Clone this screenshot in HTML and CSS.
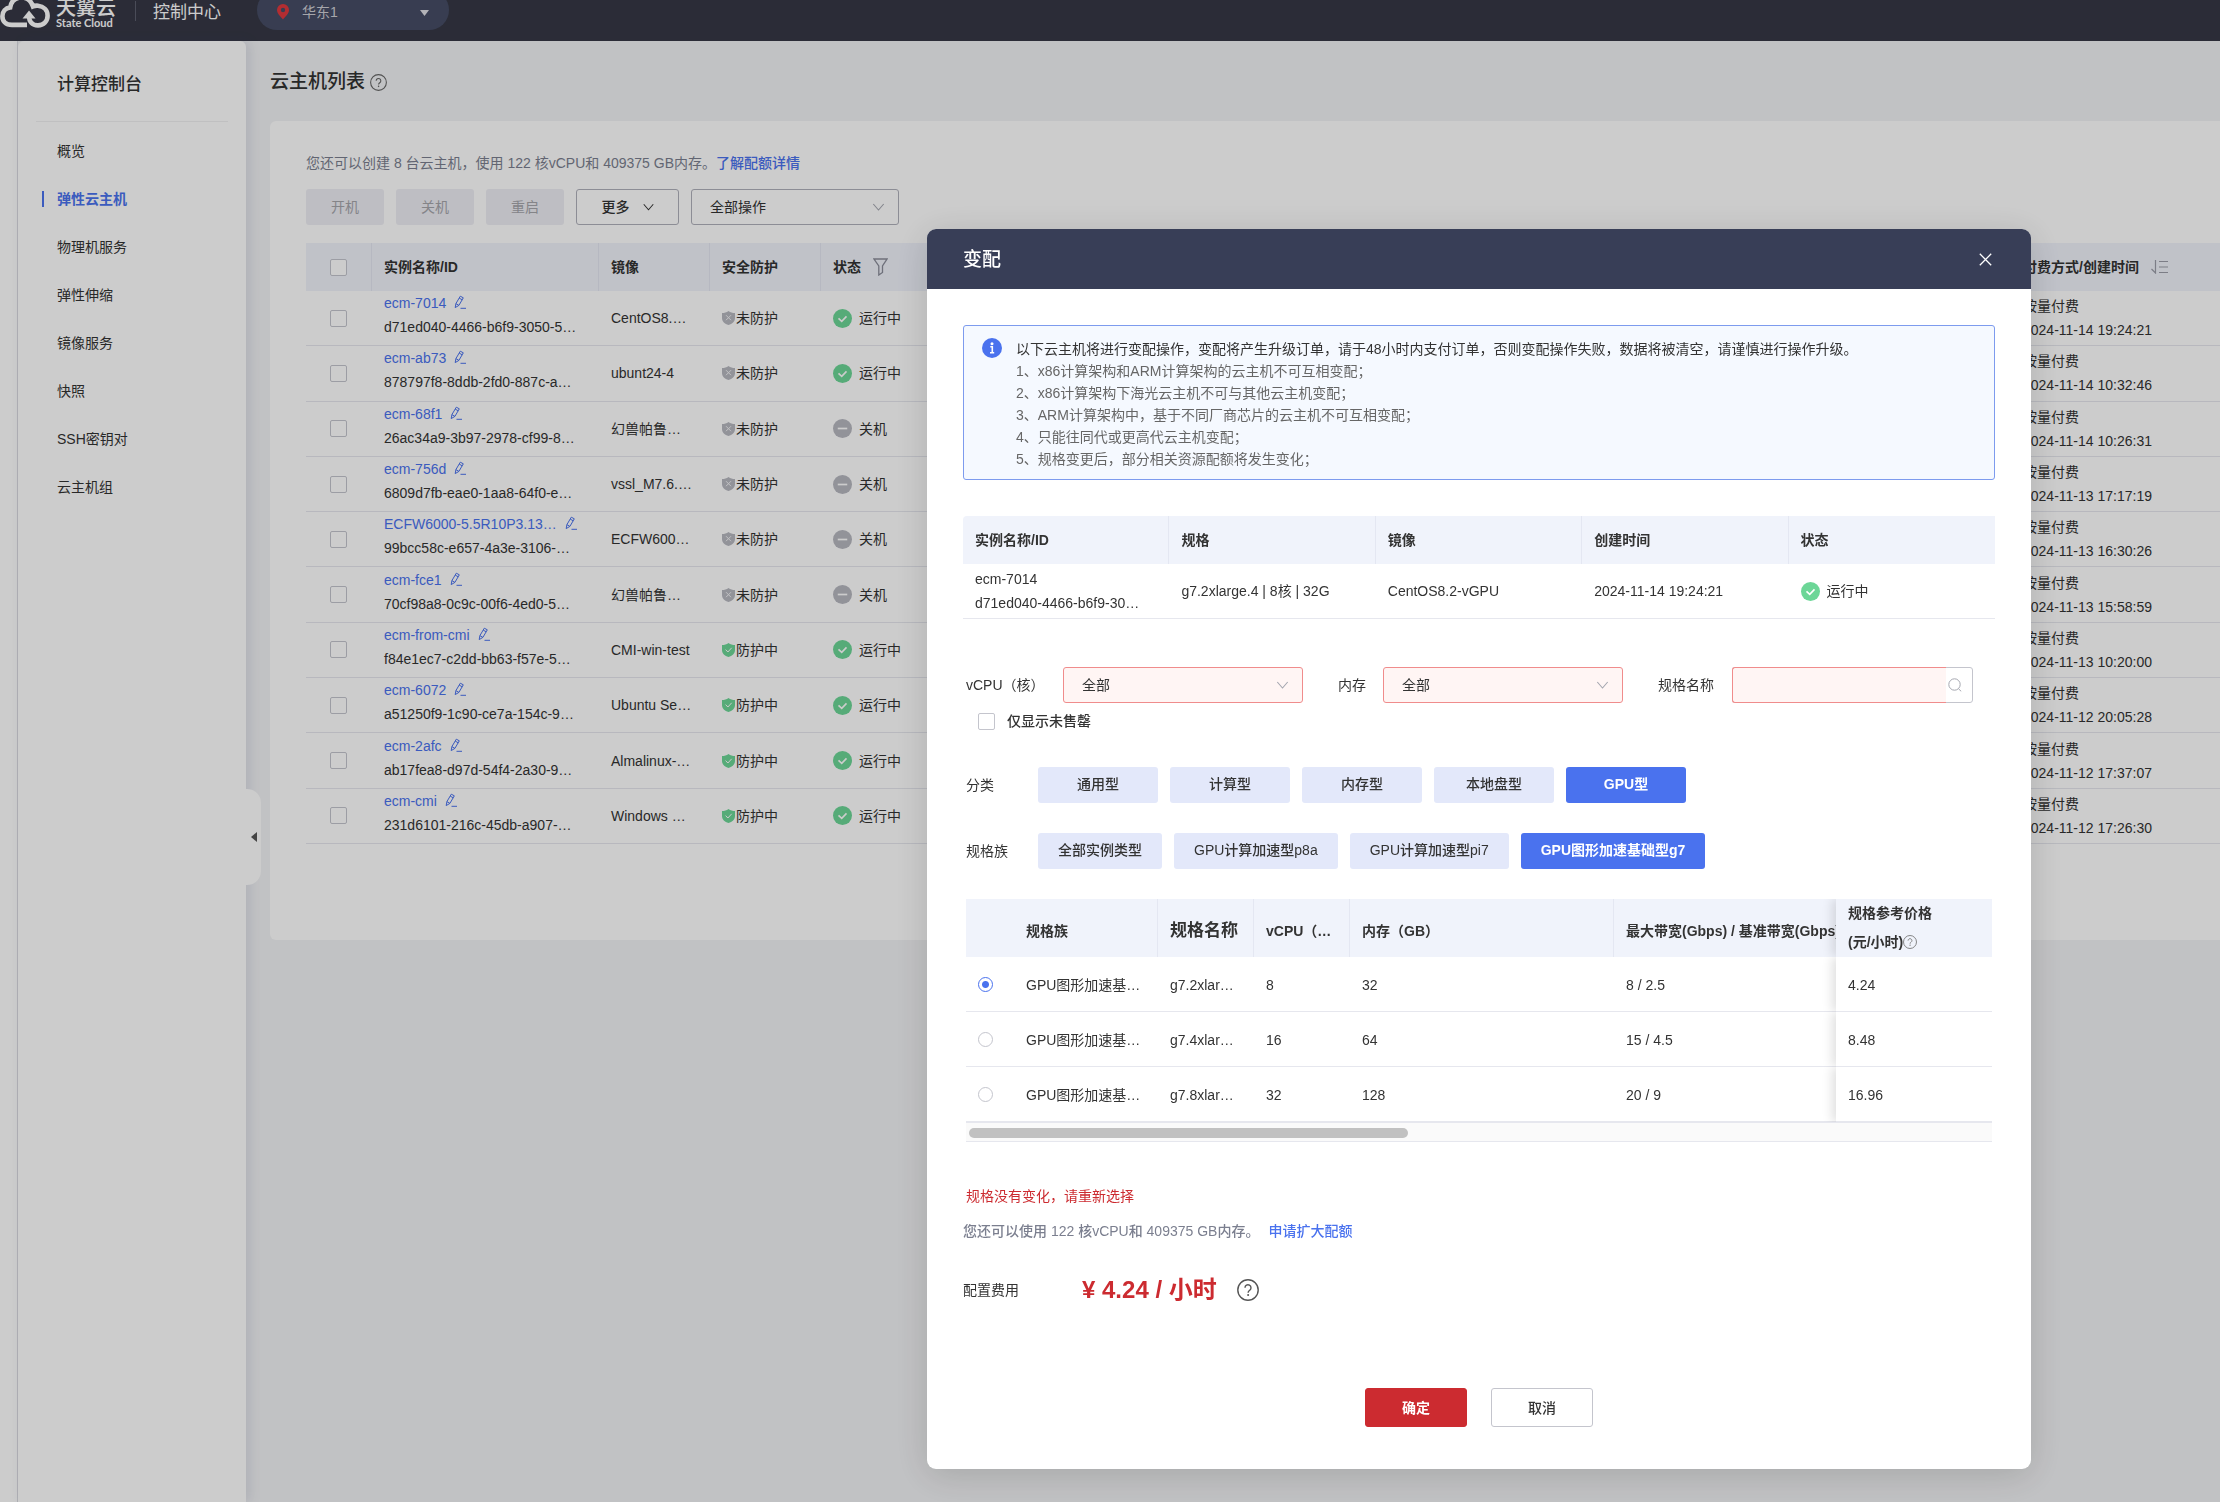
FILE: index.html
```html
<!DOCTYPE html>
<html lang="zh-CN">
<head>
    <meta charset="UTF-8">
    <meta name="viewport" content="width=device-width, initial-scale=1.0">
    <title>云主机列表 - 控制中心</title>
    <link rel="stylesheet" href="styles.css">
</head>
<body>

<!-- 公用图标 -->
<svg class="sprite" aria-hidden="true">
    <symbol id="i-edit" viewBox="0 0 12 14">
        <path d="M1.2 12.6 1.9 8.6 6.3 1.2 9.3 2.8 4.9 10.4zM5.2 3.1 8.2 4.8M1.9 8.6 4.9 10.4M6.5 13.3H12" fill="none" stroke="currentColor" stroke-width="1"/>
    </symbol>
    <symbol id="i-help" viewBox="0 0 22 22">
        <circle cx="11" cy="11" r="10.2" fill="none" stroke="currentColor" stroke-width="1.4"/>
        <path d="M8 8.8a3 3 0 1 1 4.6 2.5c-1 .7-1.5 1.1-1.5 2.4" fill="none" stroke="currentColor" stroke-width="1.4"/>
        <circle cx="11.1" cy="16" r="1" fill="currentColor"/>
    </symbol>
    <symbol id="i-down" viewBox="0 0 12 8">
        <path d="M.8 1 6 7l5.2-6" fill="none" stroke="currentColor" stroke-width="1.1"/>
    </symbol>
    <symbol id="i-ok" viewBox="0 0 20 20">
        <circle cx="10" cy="10" r="10" fill="#6cd697"/>
        <path d="M5.8 9.8 9.2 13l5-5.2" fill="none" stroke="#fff" stroke-width="1.7"/>
    </symbol>
    <symbol id="i-off" viewBox="0 0 20 20">
        <circle cx="10" cy="10" r="10" fill="#b7b8c0"/>
        <path d="M5 10h10" stroke="#fff" stroke-width="1.8"/>
    </symbol>
    <symbol id="i-shield-x" viewBox="0 0 13 14">
        <path d="M6.5 0C8.500 1.500 10.500 2 13 2v5c0 3.600-2.800 5.800-6.500 7C2.800 12.800 0 10.600 0 7V2c2.500 0 4.500-.5 6.500-2z" fill="#b7b8c0"/>
        <path d="M4 4.200l5 5M9 4.200l-5 5" stroke="#f3f3f5" stroke-width="1"/>
    </symbol>
    <symbol id="i-shield-ok" viewBox="0 0 13 14">
        <path d="M6.5 0C8.500 1.500 10.500 2 13 2v5c0 3.600-2.800 5.800-6.500 7C2.800 12.800 0 10.600 0 7V2c2.500 0 4.500-.5 6.500-2z" fill="#6cd697"/>
        <path d="M3.600 6.600 5.900 9l3.800-4.200" fill="none" stroke="#fff" stroke-width="1"/>
    </symbol>
</svg>

<header class="topbar">
    <a class="logo" href="#">
        <svg class="logo-cloud" viewBox="0 -6 50 34">
            <path d="M27 24.900H12C5.500 24.900 2.400 21 2.400 16.200 2.400 11.300 5.500 8 10.200 7.400 11.400.5 16-2.500 21.500-2.500c5.500 0 9.500 3 11.500 9 1.600-.7 3.200-1 5-.8 5.600.6 9.600 4.600 9.600 10 0 5.600-4 9.700-9.600 9.700-6 0-9-4-9-9.400V15" fill="none" stroke="#fff" stroke-width="4.600"/>
            <path d="M22.500 18.500 29 10.500l6.500 8z" fill="#fff"/>
        </svg>
        <span class="logo-text">
            <strong>天翼云</strong>
            <small>State Cloud</small>
        </span>
    </a>
    <span class="split"></span>
    <span class="center-name">控制中心</span>
    <button class="region" type="button">
        <svg width="12" height="16" viewBox="0 0 12 16"><path d="M6 0a6 6 0 0 1 6 6c0 3.500-3.500 6.500-6 9.500C3.500 12.500 0 9.500 0 6a6 6 0 0 1 6-6z" fill="#e0393e"/><circle cx="6" cy="6" r="2.200" fill="#464d66"/></svg>
        <span>华东1</span>
        <svg class="caret" width="9" height="6" viewBox="0 0 9 6"><path d="M0 0h9L4.500 6z" fill="#e0e0e6"/></svg>
    </button>
</header>

<div class="layout">
    <div class="rail"></div>
    <nav class="sidebar">
        <h2>计算控制台</h2>
        <a href="#">概览</a>
        <a href="#" class="active">弹性云主机</a>
        <a href="#">物理机服务</a>
        <a href="#">弹性伸缩</a>
        <a href="#">镜像服务</a>
        <a href="#">快照</a>
        <a href="#">SSH密钥对</a>
        <a href="#">云主机组</a>
        <button class="fold" type="button" aria-label="收起"><svg width="6" height="10" viewBox="0 0 6 10"><path d="M6 0v10L0 5z" fill="#555"/></svg></button>
    </nav>

    <main class="content">
        <h1>云主机列表<svg class="help"><use href="#i-help"/></svg></h1>
        <section class="card">
            <p class="quota">您还可以创建 8 台云主机，使用 122 核vCPU和 409375 GB内存。<a href="#">了解配额详情</a></p>
            <div class="toolbar">
                <button type="button" disabled>开机</button>
                <button type="button" disabled>关机</button>
                <button type="button" disabled>重启</button>
                <button type="button" class="more">更多<svg class="down"><use href="#i-down"/></svg></button>
                <span class="select-box">
                    <select aria-label="全部操作"><option>全部操作</option></select>
                    <svg class="arrow"><use href="#i-down"/></svg>
                </span>
            </div>

            <table class="hosts">
                <colgroup><col class="w-check"><col class="w-name"><col class="w-mid"><col class="w-mid"><col><col class="w-pay"></colgroup>
                <thead>
                    <tr>
                        <th><input type="checkbox" aria-label="全选"></th>
                        <th>实例名称/ID</th>
                        <th>镜像</th>
                        <th>安全防护</th>
                        <th><span class="inline">状态<svg width="15" height="18" viewBox="0 0 15 18"><path d="M1 1h13L9.500 8v6.500L5.800 17V8z" fill="none" stroke="#8a8c99" stroke-width="1.300"/></svg></span></th>
                        <th><span class="inline">付费方式/创建时间<svg width="17" height="14" viewBox="0 0 17 14"><path d="M4.500 0v13L.5 9M8 1.500h9M8 7h9M8 12.500h9" fill="none" stroke="#9b9da8" stroke-width="1.200"/></svg></span></th>
                    </tr>
                </thead>
                <tbody>
                    <tr>
                        <td><input type="checkbox" aria-label="ecm-7014"></td>
                        <td class="name"><a href="#">ecm-7014<svg class="edit"><use href="#i-edit"/></svg></a><div>d71ed040-4466-b6f9-3050-5…</div></td>
                        <td>CentOS8.…</td>
                        <td><span class="safe"><svg><use href="#i-shield-x"/></svg>未防护</span></td>
                        <td><span class="state"><svg><use href="#i-ok"/></svg>运行中</span></td>
                        <td>按量付费<div>2024-11-14 19:24:21</div></td>
                    </tr>
                    <tr>
                        <td><input type="checkbox" aria-label="ecm-ab73"></td>
                        <td class="name"><a href="#">ecm-ab73<svg class="edit"><use href="#i-edit"/></svg></a><div>878797f8-8ddb-2fd0-887c-a…</div></td>
                        <td>ubunt24-4</td>
                        <td><span class="safe"><svg><use href="#i-shield-x"/></svg>未防护</span></td>
                        <td><span class="state"><svg><use href="#i-ok"/></svg>运行中</span></td>
                        <td>按量付费<div>2024-11-14 10:32:46</div></td>
                    </tr>
                    <tr>
                        <td><input type="checkbox" aria-label="ecm-68f1"></td>
                        <td class="name"><a href="#">ecm-68f1<svg class="edit"><use href="#i-edit"/></svg></a><div>26ac34a9-3b97-2978-cf99-8…</div></td>
                        <td>幻兽帕鲁…</td>
                        <td><span class="safe"><svg><use href="#i-shield-x"/></svg>未防护</span></td>
                        <td><span class="state"><svg><use href="#i-off"/></svg>关机</span></td>
                        <td>按量付费<div>2024-11-14 10:26:31</div></td>
                    </tr>
                    <tr>
                        <td><input type="checkbox" aria-label="ecm-756d"></td>
                        <td class="name"><a href="#">ecm-756d<svg class="edit"><use href="#i-edit"/></svg></a><div>6809d7fb-eae0-1aa8-64f0-e…</div></td>
                        <td>vssl_M7.6.…</td>
                        <td><span class="safe"><svg><use href="#i-shield-x"/></svg>未防护</span></td>
                        <td><span class="state"><svg><use href="#i-off"/></svg>关机</span></td>
                        <td>按量付费<div>2024-11-13 17:17:19</div></td>
                    </tr>
                    <tr>
                        <td><input type="checkbox" aria-label="ECFW6000"></td>
                        <td class="name"><a href="#">ECFW6000-5.5R10P3.13…<svg class="edit"><use href="#i-edit"/></svg></a><div>99bcc58c-e657-4a3e-3106-…</div></td>
                        <td>ECFW600…</td>
                        <td><span class="safe"><svg><use href="#i-shield-x"/></svg>未防护</span></td>
                        <td><span class="state"><svg><use href="#i-off"/></svg>关机</span></td>
                        <td>按量付费<div>2024-11-13 16:30:26</div></td>
                    </tr>
                    <tr>
                        <td><input type="checkbox" aria-label="ecm-fce1"></td>
                        <td class="name"><a href="#">ecm-fce1<svg class="edit"><use href="#i-edit"/></svg></a><div>70cf98a8-0c9c-00f6-4ed0-5…</div></td>
                        <td>幻兽帕鲁…</td>
                        <td><span class="safe"><svg><use href="#i-shield-x"/></svg>未防护</span></td>
                        <td><span class="state"><svg><use href="#i-off"/></svg>关机</span></td>
                        <td>按量付费<div>2024-11-13 15:58:59</div></td>
                    </tr>
                    <tr>
                        <td><input type="checkbox" aria-label="ecm-from-cmi"></td>
                        <td class="name"><a href="#">ecm-from-cmi<svg class="edit"><use href="#i-edit"/></svg></a><div>f84e1ec7-c2dd-bb63-f57e-5…</div></td>
                        <td>CMI-win-test</td>
                        <td><span class="safe"><svg><use href="#i-shield-ok"/></svg>防护中</span></td>
                        <td><span class="state"><svg><use href="#i-ok"/></svg>运行中</span></td>
                        <td>按量付费<div>2024-11-13 10:20:00</div></td>
                    </tr>
                    <tr>
                        <td><input type="checkbox" aria-label="ecm-6072"></td>
                        <td class="name"><a href="#">ecm-6072<svg class="edit"><use href="#i-edit"/></svg></a><div>a51250f9-1c90-ce7a-154c-9…</div></td>
                        <td>Ubuntu Se…</td>
                        <td><span class="safe"><svg><use href="#i-shield-ok"/></svg>防护中</span></td>
                        <td><span class="state"><svg><use href="#i-ok"/></svg>运行中</span></td>
                        <td>按量付费<div>2024-11-12 20:05:28</div></td>
                    </tr>
                    <tr>
                        <td><input type="checkbox" aria-label="ecm-2afc"></td>
                        <td class="name"><a href="#">ecm-2afc<svg class="edit"><use href="#i-edit"/></svg></a><div>ab17fea8-d97d-54f4-2a30-9…</div></td>
                        <td>Almalinux-…</td>
                        <td><span class="safe"><svg><use href="#i-shield-ok"/></svg>防护中</span></td>
                        <td><span class="state"><svg><use href="#i-ok"/></svg>运行中</span></td>
                        <td>按量付费<div>2024-11-12 17:37:07</div></td>
                    </tr>
                    <tr>
                        <td><input type="checkbox" aria-label="ecm-cmi"></td>
                        <td class="name"><a href="#">ecm-cmi<svg class="edit"><use href="#i-edit"/></svg></a><div>231d6101-216c-45db-a907-…</div></td>
                        <td>Windows …</td>
                        <td><span class="safe"><svg><use href="#i-shield-ok"/></svg>防护中</span></td>
                        <td><span class="state"><svg><use href="#i-ok"/></svg>运行中</span></td>
                        <td>按量付费<div>2024-11-12 17:26:30</div></td>
                    </tr>
                </tbody>
            </table>
        </section>
    </main>
</div>

<div class="mask">
    <div class="modal" role="dialog" aria-labelledby="modal-title">
        <div class="modal-head">
            <h3 id="modal-title">变配</h3>
            <button type="button" aria-label="关闭"><svg width="13" height="13" viewBox="0 0 13 13"><path d="M.8.8l11.400 11.400M12.200.8.8 12.200" stroke="#fff" stroke-width="1.300"/></svg></button>
        </div>
        <div class="modal-body">
            <div class="alert">
                <svg width="20" height="20" viewBox="0 0 20 20"><circle cx="10" cy="10" r="10" fill="#4a72ee"/><circle cx="10" cy="5.800" r="1.500" fill="#fff"/><path d="M8.300 8.800H10.300V14.500M8 14.700h4.200" fill="none" stroke="#fff" stroke-width="1.600"/></svg>
                <div>
                    <p class="strong">以下云主机将进行变配操作，变配将产生升级订单，请于48小时内支付订单，否则变配操作失败，数据将被清空，请谨慎进行操作升级。</p>
                    <p>1、x86计算架构和ARM计算架构的云主机不可互相变配；</p>
                    <p>2、x86计算架构下海光云主机不可与其他云主机变配；</p>
                    <p>3、ARM计算架构中，基于不同厂商芯片的云主机不可互相变配；</p>
                    <p>4、只能往同代或更高代云主机变配；</p>
                    <p>5、规格变更后，部分相关资源配额将发生变化；</p>
                </div>
            </div>

            <table class="current">
                <thead>
                    <tr><th>实例名称/ID</th><th>规格</th><th>镜像</th><th>创建时间</th><th>状态</th></tr>
                </thead>
                <tbody>
                    <tr>
                        <td>ecm-7014<div>d71ed040-4466-b6f9-30…</div></td>
                        <td>g7.2xlarge.4 | 8核 | 32G</td>
                        <td>CentOS8.2-vGPU</td>
                        <td>2024-11-14 19:24:21</td>
                        <td><span class="state"><svg><use href="#i-ok"/></svg>运行中</span></td>
                    </tr>
                </tbody>
            </table>

            <div class="filters">
                <label class="l-cpu" for="cpu">vCPU（核）</label>
                <span class="select-box err">
                    <select id="cpu"><option>全部</option></select>
                    <svg class="arrow"><use href="#i-down"/></svg>
                </span>
                <label class="l-mem" for="mem">内存</label>
                <span class="select-box err">
                    <select id="mem"><option>全部</option></select>
                    <svg class="arrow"><use href="#i-down"/></svg>
                </span>
                <label class="l-spec" for="spec">规格名称</label>
                <span class="search">
                    <input type="text" id="spec">
                    <svg width="14" height="14" viewBox="0 0 14 14"><circle cx="6.500" cy="6.500" r="5.700" fill="none" stroke="#a5a7b0"/><path d="M10.500 10.800l2.700 2.500" stroke="#a5a7b0"/></svg>
                </span>
            </div>
            <label class="only"><input type="checkbox">仅显示未售罄</label>

            <div class="tabs kinds">
                <span class="tabs-label">分类</span>
                <button type="button">通用型</button>
                <button type="button">计算型</button>
                <button type="button">内存型</button>
                <button type="button">本地盘型</button>
                <button type="button" class="on">GPU型</button>
            </div>
            <div class="tabs">
                <span class="tabs-label">规格族</span>
                <button type="button">全部实例类型</button>
                <button type="button">GPU计算加速型p8a</button>
                <button type="button">GPU计算加速型pi7</button>
                <button type="button" class="on">GPU图形加速基础型g7</button>
            </div>

            <div class="spec-wrap">
                <table class="specs">
                    <colgroup><col class="w-radio"><col class="w-family"><col class="w-s"><col class="w-s"><col class="w-mem"><col><col class="w-price"></colgroup>
                    <thead>
                        <tr>
                            <th class="plain"></th>
                            <th>规格族</th>
                            <th class="big">规格名称</th>
                            <th>vCPU（…</th>
                            <th>内存（GB）</th>
                            <th class="plain">最大带宽(Gbps) / 基准带宽(Gbps)</th>
                            <th class="fixed">规格参考价格<div>(元/小时)<svg class="help-s"><use href="#i-help"/></svg></div></th>
                        </tr>
                    </thead>
                    <tbody>
                        <tr>
                            <td><input type="radio" name="flavor" aria-label="g7.2xlarge.4" checked></td>
                            <td>GPU图形加速基…</td>
                            <td>g7.2xlar…</td>
                            <td>8</td>
                            <td>32</td>
                            <td>8 / 2.5</td>
                            <td class="fixed">4.24</td>
                        </tr>
                        <tr>
                            <td><input type="radio" name="flavor" aria-label="g7.4xlarge.4"></td>
                            <td>GPU图形加速基…</td>
                            <td>g7.4xlar…</td>
                            <td>16</td>
                            <td>64</td>
                            <td>15 / 4.5</td>
                            <td class="fixed">8.48</td>
                        </tr>
                        <tr>
                            <td><input type="radio" name="flavor" aria-label="g7.8xlarge.4"></td>
                            <td>GPU图形加速基…</td>
                            <td>g7.8xlar…</td>
                            <td>32</td>
                            <td>128</td>
                            <td>20 / 9</td>
                            <td class="fixed">16.96</td>
                        </tr>
                    </tbody>
                </table>
            </div>
            <div class="scrollbar"><div class="thumb"></div></div>

            <p class="error">规格没有变化，请重新选择</p>
            <p class="remain">您还可以使用 122 核vCPU和 409375 GB内存。<a href="#">申请扩大配额</a></p>
            <div class="fee">
                <span class="fee-label">配置费用</span>
                <span class="price">¥ 4.24 / 小时</span>
                <svg><use href="#i-help"/></svg>
            </div>
            <div class="actions">
                <button type="button" class="primary">确定</button>
                <button type="button">取消</button>
            </div>
        </div>
    </div>
</div>

</body>
</html>
```
FILE: styles.css
```css
* {
    box-sizing: border-box;
}

body {
    margin: 0;
    min-height: 100vh;
    display: flex;
    flex-direction: column;
    overflow: hidden;
    font-family: "Liberation Sans", "Noto Sans CJK SC", sans-serif;
    font-size: 14px;
    line-height: 24px;
    color: #333;
    background: #f2f3f5;
}

h1, h2, h3, p {
    margin: 0;
}

a {
    color: #4a72ee;
    text-decoration: none;
}

button, select, input {
    font: inherit;
    color: inherit;
    margin: 0;
}

button {
    cursor: pointer;
    padding: 0;
}

svg {
    flex-shrink: 0;
}

.sprite {
    display: none;
}

/* ---------- 顶部 ---------- */
.topbar {
    height: 41px;
    display: flex;
    align-items: flex-end;
    padding-bottom: 11px;
    background: #363845;
    color: #fff;
}

.logo {
    display: flex;
    align-items: flex-end;
    gap: 6px;
    padding-bottom: 2px;
    color: #fff;
}

.logo-cloud {
    width: 50px;
    height: 34px;
}

.logo-text {
    display: flex;
    flex-direction: column;
    width: 79px;
}

.logo-text strong {
    font-size: 20px;
    font-weight: 500;
    line-height: 20px;
}

.logo-text small {
    font-family: Lato, sans-serif;
    font-size: 11px;
    font-weight: 700;
    line-height: 10px;
}

.split {
    width: 1px;
    height: 20px;
    margin-bottom: 9px;
    background: #5d606e;
}

.center-name {
    width: 121px;
    padding: 0 17px 5px;
    font-size: 17px;
}

.region {
    width: 192px;
    height: 40px;
    display: flex;
    align-items: flex-end;
    gap: 13px;
    padding: 0 20px 6px;
    border: 0;
    border-radius: 20px;
    background: #464d66;
    color: #d0d0d6;
}

.region svg {
    margin-bottom: 4px;
}

.region .caret {
    margin-left: auto;
    margin-bottom: 8px;
}

/* ---------- 布局 ---------- */
.layout {
    flex: 1;
    display: flex;
}

.rail {
    width: 18px;
    background: #fff;
    border-right: 1px solid #dcdde2;
}

.sidebar {
    position: relative;
    z-index: 1;
    width: 228px;
    padding: 0 18px;
    background: #fff;
    border-radius: 6px 6px 0 0;
    box-shadow: 4px 0 12px rgba(60, 65, 120, 0.12);
}

.sidebar h2 {
    height: 81px;
    margin-bottom: 5px;
    padding: 32px 21px 0;
    border-bottom: 1px solid #f0f0f2;
    font-size: 17px;
    font-weight: 500;
}

.sidebar a {
    display: block;
    padding: 0 21px;
    line-height: 48px;
    color: #333;
}

.sidebar a.active {
    position: relative;
    color: #4a72ee;
    font-weight: 700;
}

.sidebar a.active::before {
    content: "";
    position: absolute;
    left: 6px;
    top: 16px;
    width: 2px;
    height: 16px;
    background: #4a72ee;
}

.fold {
    position: absolute;
    left: 100%;
    top: 748px;
    width: 15px;
    height: 96px;
    border: 0;
    border-radius: 0 14px 14px 0;
    background: #fff;
}

.fold svg {
    display: block;
    margin: 0 auto;
}

.content {
    flex: 1;
    min-width: 0;
    padding: 26px 0 0 24px;
}

.content h1 {
    display: flex;
    align-items: center;
    gap: 5px;
    height: 30px;
    font-size: 19px;
    font-weight: 500;
}

.help {
    width: 17px;
    height: 17px;
    color: #666;
}

.card {
    margin-top: 24px;
    padding: 30px 0 0 36px;
    height: 819px;
    background: #fff;
    border-radius: 6px 0 0 6px;
}

.quota {
    color: #7b7f8f;
}

.quota a {
    font-weight: 500;
}

.toolbar {
    display: flex;
    gap: 12px;
    margin: 14px 0 18px;
}

.toolbar button {
    width: 78px;
    height: 36px;
    border: 0;
    border-radius: 3px;
    background: #eeeef4;
    color: #a5a5ab;
}

.toolbar .more {
    width: 103px;
    display: flex;
    align-items: center;
    justify-content: center;
    gap: 13px;
    border: 1px solid #b0b1bb;
    background: #fff;
    color: #333;
    font-weight: 500;
}

.down {
    width: 11px;
    height: 8px;
}

.select-box {
    position: relative;
    width: 208px;
}

.select-box select {
    width: 100%;
    height: 36px;
    padding: 0 18px;
    appearance: none;
    border: 1px solid #b0b1bb;
    border-radius: 3px;
    background: #fff;
}

.arrow {
    position: absolute;
    right: 14px;
    top: 14px;
    width: 13px;
    height: 8px;
    color: #a5a7b0;
    pointer-events: none;
}

/* ---------- 表格 ---------- */
table {
    width: 100%;
    table-layout: fixed;
    border-collapse: separate;
    border-spacing: 0;
}

th {
    padding: 0 12px;
    text-align: left;
    font-weight: 700;
    background: #f0f3fb;
    border-right: 1px solid #e4e7f2;
}

th:last-child {
    border-right: 0;
}

td {
    padding: 0 12px;
    border-bottom: 1px solid #e6e7ee;
    white-space: nowrap;
}

.hosts {
    height: 601px;
}

.hosts th {
    height: 48px;
}

.hosts .name {
    padding-bottom: 6px;
}

.hosts th:first-child,
.hosts td:first-child {
    padding-left: 24px;
}

.w-check { width: 66px; }
.w-name { width: 227px; }
.w-mid { width: 111px; }
.w-pay { width: 209px; }
.w-radio { width: 48px; }
.w-family { width: 144px; }
.w-s { width: 96px; }
.w-mem { width: 264px; }
.w-price { width: 156px; }

input[type="checkbox"] {
    display: block;
    appearance: none;
    width: 17px;
    height: 17px;
    border: 1px solid #c4c5cd;
    border-radius: 2px;
    background: #fff;
}

.inline {
    display: flex;
    align-items: center;
    gap: 12px;
}

.edit {
    width: 12px;
    height: 14px;
    margin-left: 8px;
    vertical-align: -1px;
}

.safe {
    display: flex;
    align-items: center;
    gap: 1px;
}

.safe svg {
    width: 13px;
    height: 14px;
}

.state {
    display: flex;
    align-items: center;
    gap: 7px;
}

.state svg {
    width: 19px;
    height: 19px;
}

/* ---------- 变配弹窗 ---------- */
.mask {
    position: fixed;
    inset: 0;
    z-index: 10;
    display: flex;
    justify-content: flex-end;
    align-items: flex-start;
    padding: 229px 189px 0;
    background: rgba(0, 0, 0, 0.2);
}

.modal {
    width: 100%;
    max-width: 1104px;
    border-radius: 9px;
    overflow: hidden;
    background: #fff;
    box-shadow: 0 6px 36px rgba(0, 0, 0, 0.15);
}

.modal-head {
    display: flex;
    align-items: center;
    justify-content: space-between;
    height: 60px;
    padding: 1px 36px 0;
    background: #383e57;
    color: #fff;
}

.modal-head h3 {
    font-size: 19px;
    font-weight: 500;
}

.modal-head button {
    display: flex;
    padding: 3px;
    border: 0;
    background: none;
}

.modal-body {
    padding: 36px 36px 42px;
}

.alert {
    display: flex;
    gap: 14px;
    padding: 12px 18px 9px;
    border: 1px solid #7d9bee;
    border-radius: 3px;
    background: #f5f9ff;
    line-height: 22px;
    color: #666;
}

.alert .strong {
    color: #333;
}

.current {
    margin-top: 36px;
}

.current th {
    height: 48px;
}

.current th:first-child {
    border-radius: 4px 0 0 0;
}

.current td {
    height: 55px;
}

.filters {
    display: flex;
    align-items: center;
    margin: 48px 3px 0;
}

.l-cpu { width: 97px; }
.l-mem { width: 80px; padding-left: 35px; }
.l-spec { width: 109px; padding-left: 35px; }

.err {
    width: 240px;
}

.err select {
    border-color: #f08c8c;
    background: #fff5f4;
}

.filters .search {
    display: flex;
    align-items: center;
    width: 241px;
    height: 36px;
    border: 1px solid #c4c5cd;
    border-radius: 3px;
}

.search input {
    flex: 1;
    min-width: 0;
    height: 36px;
    margin: -1px 2px -1px -1px;
    border: 1px solid #f08c8c;
    border-right: 0;
    border-radius: 3px 0 0 3px;
    background: #fff5f4;
}

.search svg {
    margin-right: 10px;
}

.only {
    display: flex;
    align-items: center;
    gap: 12px;
    width: max-content;
    margin: 6px 15px 0;
    font-weight: 500;
}

.tabs {
    display: flex;
    align-items: center;
    gap: 12px;
    margin: 30px 3px 0;
}

.kinds {
    margin-top: 34px;
}

.tabs-label {
    width: 60px;
}

.tabs button {
    height: 36px;
    padding: 0 20px 2px;
    border: 0;
    border-radius: 3px;
    background: #e3e8fa;
    font-weight: 500;
}

.kinds button {
    width: 120px;
}

.tabs .on {
    background: #4a72ee;
    color: #fff;
    font-weight: 700;
}

.spec-wrap {
    margin: 30px 3px 0;
    overflow: hidden;
    border-bottom: 1px solid #e6e7ee;
}

.specs {
    width: 2400px;
}

.specs th {
    height: 58px;
    padding-top: 5px;
    white-space: nowrap;
}

.specs .plain:first-child {
    border-right: 0;
}

.specs .big {
    font-size: 17px;
}

.specs td {
    height: 55px;
    padding-top: 1px;
}

/* 右侧固定列，阴影只留在左边 */
.specs .fixed {
    position: sticky;
    right: 0;
    box-shadow: -4px 0 10px rgba(0, 0, 0, 0.12);
    clip-path: inset(0 0 0 -14px);
}

.specs th.fixed {
    padding-top: 0;
    line-height: 29px;
}

.specs td.fixed {
    background: #fff;
}

.help-s {
    width: 14px;
    height: 14px;
    vertical-align: -2px;
    color: #777;
}

input[type="radio"] {
    display: block;
    appearance: none;
    width: 15px;
    height: 15px;
    border: 1px solid #c4c5cd;
    border-radius: 50%;
    background: #fff;
}

input[type="radio"]:checked {
    border: 1px solid #4a72ee;
    background: radial-gradient(#4a72ee 3px, #fff 4px);
}

.scrollbar {
    margin: 0 3px;
    height: 19px;
    padding: 5px 3px;
    background: #fafafa;
    border-bottom: 1px solid #e6e7ee;
}

.thumb {
    width: 43%;
    height: 10px;
    border-radius: 5px;
    background: #c1c1c1;
}

.error {
    margin: 42px 3px 0;
    color: #cc2b30;
}

.remain {
    margin-top: 11px;
    color: #7b7f8f;
    font-weight: 500;
}

.remain a {
    margin-left: 9px;
}

.fee {
    display: flex;
    align-items: center;
    height: 36px;
    margin-top: 29px;
}

.fee-label {
    width: 119px;
}

.price {
    font-size: 24px;
    font-weight: 700;
    color: #cc2b30;
}

.fee svg {
    width: 22px;
    height: 22px;
    margin-left: 20px;
    color: #555;
}

.actions {
    display: flex;
    justify-content: center;
    gap: 24px;
    margin-top: 80px;
}

.actions button {
    width: 102px;
    height: 39px;
    border: 1px solid #c4c5cd;
    border-radius: 3px;
    background: #fff;
    font-weight: 500;
}

.actions .primary {
    border-color: #cc2b30;
    background: #cc2b30;
    color: #fff;
    font-weight: 700;
}
```
